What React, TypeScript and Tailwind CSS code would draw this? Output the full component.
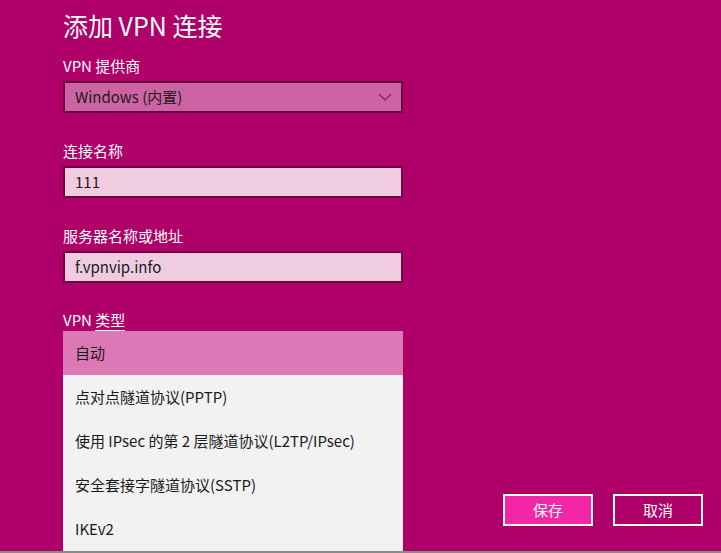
import React from "react";

const font = { fontFamily: '"Noto Sans CJK SC", "Noto Sans", sans-serif' };

function Label({ children }: { children: React.ReactNode }) {
  return <div className="text-[15px] leading-[20px] text-white">{children}</div>;
}

export default function App() {
  const items = ["点对点隧道协议(PPTP)", "使用 IPsec 的第 2 层隧道协议(L2TP/IPsec)", "安全套接字隧道协议(SSTP)", "IKEv2"];
  return (
    <div className="relative flex h-[553px] w-[721px] flex-col overflow-hidden bg-[#ae0068]" style={font}>
      <div className="flex flex-col pl-[63px] pt-[8px]">
        <div className="text-[25px] leading-[35px] text-white">添加 VPN 连接</div>
        <div className="mt-[13px]"><Label>VPN 提供商</Label></div>
        <div className="mt-[5px] flex h-[32px] w-[340px] items-center justify-between border-2 border-[#6e0042] bg-[#cc64a4] pl-[10px] pr-[8px] text-[15px] text-[#1a1a1a]">
          <span>Windows (内置)</span>
          <svg width="14" height="8" viewBox="0 0 14 8" className="mr-[1px]">
            <path d="M1 1 L7 7 L13 1" fill="none" stroke="#6e2a55" strokeWidth="1.2" />
          </svg>
        </div>
        <div className="mt-[28px]"><Label>连接名称</Label></div>
        <div className="mt-[5px] flex h-[32px] w-[340px] items-center border-2 border-[#6e0042] bg-[#f0cce1] pl-[10px] text-[15px] text-[#1a1a1a]">111</div>
        <div className="mt-[28px]"><Label>服务器名称或地址</Label></div>
        <div className="mt-[5px] flex h-[32px] w-[340px] items-center border-2 border-[#6e0042] bg-[#f0cce1] pl-[10px] text-[15px] text-[#1a1a1a]">f.vpnvip.info</div>
        <div className="mt-[27px]">
          <div className="text-[15px] leading-[20px] text-white">
            VPN <span className="border-b border-white">类型</span>
          </div>
        </div>
      </div>
      <div className="absolute left-[63px] top-[331px] w-[340px] bg-[#f2f2f2] text-[15px] text-[#1a1a1a]">
        <div className="flex h-[44px] items-center bg-[#db78b5] pl-[12px]">自动</div>
        {items.map((t) => (
          <div key={t} className="flex h-[44px] items-center pl-[12px]">{t}</div>
        ))}
      </div>
      <div className="mt-auto flex justify-end gap-[20px] pb-[27px] pr-[18px]">
        <button className="flex h-[32px] w-[90px] items-center justify-center border-2 border-white bg-[#f226a6] text-[15px] text-white">保存</button>
        <button className="flex h-[32px] w-[90px] items-center justify-center border-2 border-white bg-[#ae0068] text-[15px] text-white">取消</button>
      </div>
      <div className="absolute bottom-0 left-0 h-[2px] w-full bg-[#8a8a8a]" />
    </div>
  );
}
